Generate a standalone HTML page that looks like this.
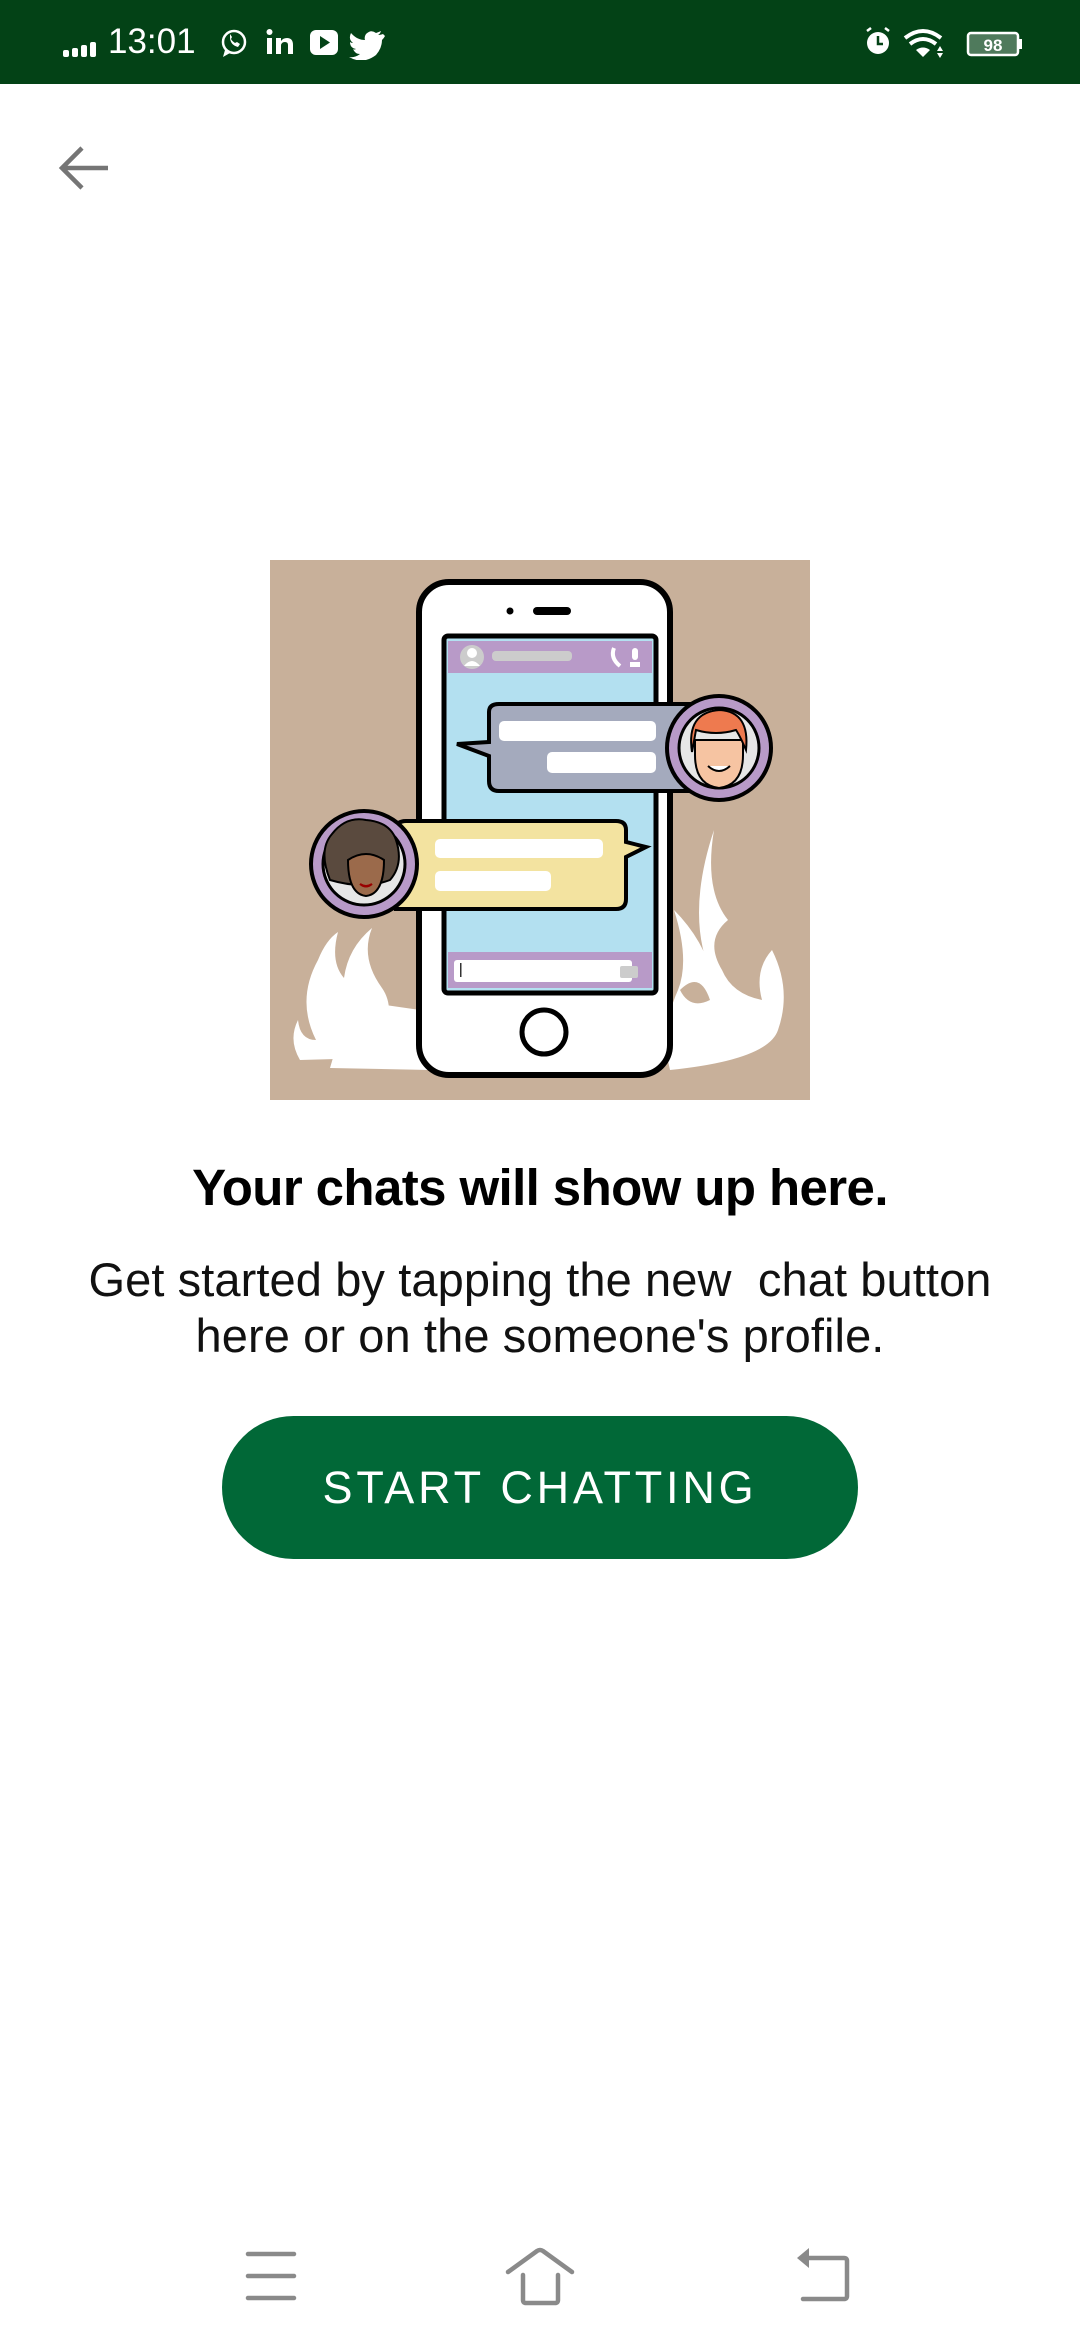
<!DOCTYPE html>
<html><head><meta charset="utf-8"><style>
*{margin:0;padding:0;box-sizing:border-box}
body{width:1080px;height:2340px;background:#fff;position:relative;overflow:hidden;font-family:"Liberation Sans",sans-serif}
.sb{position:absolute;left:0;top:0;width:1080px;height:84px;background:#034216;color:#fff}
.abs{position:absolute}
.title{position:absolute;left:0;width:1080px;top:1158px;text-align:center;font-weight:bold;font-size:51px;letter-spacing:-0.6px;color:#000}
.body{position:absolute;left:0;width:1080px;top:1252px;text-align:center;font-size:47px;line-height:56px;color:#111;letter-spacing:0.1px}
.btn{position:absolute;left:222px;top:1416px;width:636px;height:143px;border-radius:72px;background:#016837;color:#fff;font-size:45px;letter-spacing:3.8px;text-align:center;line-height:143px}
</style></head><body>
<div class="sb">
 <svg class="abs" style="left:60px;top:38px" width="40" height="20"><rect x="3" y="12" width="6" height="7" rx="2" fill="#fff"/><rect x="12" y="10" width="6" height="9" rx="2" fill="#fff"/><rect x="21" y="7" width="6" height="12" rx="2" fill="#fff"/><rect x="30" y="4" width="6" height="15" rx="2" fill="#fff"/></svg>
 <div class="abs" style="left:108px;top:22px;font-size:35px">13:01</div>
 <svg class="abs" style="left:220px;top:28px" width="170" height="32">
  <circle cx="14" cy="14" r="11" fill="none" stroke="#fff" stroke-width="2.5"/><path d="M5 22 L3 29 L10 25" fill="#fff"/><path d="M10 9 q0 8 8 10 l2-3 -3-2 -2 1 q-3-2-4-4 l1-2 -2-3z" fill="#fff"/>
  <rect x="47" y="10" width="5" height="16" fill="#fff"/><circle cx="49.5" cy="4" r="3" fill="#fff"/><path d="M56 10h5v3q2-3 6-3q6 0 6 7v9h-5v-9q0-3-3-3q-4 0-4 4v8h-5z" fill="#fff"/>
  <rect x="90" y="2" width="28" height="25" rx="6" fill="#fff"/><path d="M100 8 L110 14.5 L100 21z" fill="#034216"/>
  <path d="M163 6 q-3 1-5 1 q2-1 3-4 q-2 1-5 2 q-5-4-10 1 q-2 3-1 6 q-8 0-14-7 q-3 6 2 10 q-2 0-3-1 q0 6 6 7 q-2 1-3 0 q2 5 7 5 q-5 4-11 3 q14 8 27-2 q6-7 6-15 q2-2 3-4z" fill="#fff"/>
 </svg>
 <svg class="abs" style="left:860px;top:26px" width="170" height="36">
  <circle cx="18" cy="17" r="11" fill="#fff"/><path d="M18 10v8h5" stroke="#034216" stroke-width="2.5" fill="none"/><path d="M7 5l4-3M29 5l-4-3" stroke="#fff" stroke-width="2.5"/>
  <path d="M45 12 q18-14 36 0" stroke="#fff" stroke-width="4" fill="none"/><path d="M50 18 q13-10 26 0" stroke="#fff" stroke-width="4" fill="none"/><path d="M56 24 q7-5 14 0 l-7 7z" fill="#fff"/><path d="M80 20l3 5h-6zM80 32l3-5h-6z" fill="#fff"/>
  <rect x="108" y="7" width="50" height="22" rx="3" fill="#4f7a5c" stroke="#fff" stroke-width="2.5"/><rect x="159" y="13" width="3" height="10" fill="#fff"/><text x="133" y="25" fill="#fff" font-size="17" font-weight="bold" text-anchor="middle" font-family="Liberation Sans">98</text>
 </svg>
</div>
<svg class="abs" style="left:56px;top:144px" width="56" height="48"><path d="M52 24H6M26 4L6 24l20 20" stroke="#757575" stroke-width="4.5" fill="none"/></svg>

<svg class="abs" style="left:270px;top:560px" width="540" height="540" viewBox="0 0 540 540">
 <rect width="540" height="540" fill="#c8b09a"/>
 <path d="M30 500 q-12-20 -2-40 q2 20 18 20 q-20-40 2-80 q8-20 20-28 q-8 30 6 46 q4-30 28-50 q-12 30 10 60 q18 26 -10 70z" fill="#fff"/>
 <path d="M60 508 l100 2 -10-60 -70 -10z" fill="#fff"/>
 <path d="M400 510 q-10-40 8-80 q12-30 -4-80 q30 30 40 70 q-30-60 0-150 q-10 60 14 90 q-24 20 -6 50 q10 24 40 30 q-8-30 10-50 q20 40 6 80 q-10 30 -108 40z" fill="#fff"/>
 <path d="M410 430 q20-20 30 10 q-20 10 -30-10z" fill="#c8b09a"/>
 <rect x="149" y="22" width="251" height="493" rx="30" fill="#fff" stroke="#000" stroke-width="6"/>
 <circle cx="240" cy="51" r="3.5" fill="#000"/><rect x="263" y="47" width="38" height="8" rx="4" fill="#000"/>
 <rect x="174" y="76" width="212" height="357" rx="4" fill="#b3e0f0" stroke="#000" stroke-width="5"/>
 <rect x="178" y="81" width="204" height="32" fill="#b89ac8"/>
 <circle cx="202" cy="97" r="12" fill="#ccc"/><circle cx="202" cy="93" r="5" fill="#fff"/><path d="M194 106 q8-10 16 0z" fill="#fff"/>
 <rect x="222" y="91" width="80" height="10" rx="4" fill="#ccc"/>
 <path d="M344 88 q-4 10 6 18" stroke="#fff" stroke-width="4" fill="none"/><rect x="362" y="88" width="6" height="12" rx="3" fill="#fff"/><rect x="360" y="102" width="10" height="5" fill="#fff"/>
 <rect x="178" y="392" width="204" height="36" fill="#b89ac8"/>
 <rect x="184" y="400" width="178" height="22" rx="3" fill="#fff"/><rect x="190" y="403" width="1.5" height="14" fill="#333"/><rect x="350" y="406" width="18" height="12" rx="2" fill="#ccc"/>
 <circle cx="274" cy="472" r="22" fill="#fff" stroke="#000" stroke-width="5"/>
 <path d="M219 152 q0-8 10-8 h195 v87 h-195 q-10 0-10-10 v-25 l-32-12 32-2z" fill="#a4aabd" stroke="#000" stroke-width="4"/>
 <rect x="229" y="161" width="157" height="20" rx="5" fill="#fff"/><rect x="277" y="192" width="109" height="21" rx="5" fill="#fff"/>
 <circle cx="449" cy="188" r="52" fill="#b89ac8" stroke="#000" stroke-width="4"/><circle cx="449" cy="188" r="40" fill="#e6e6e6" stroke="#000" stroke-width="3"/>
 <path d="M425 195 q0 30 24 33 q24-3 24-33 v-15 h-48z" fill="#f6c4a2" stroke="#000" stroke-width="2"/>
 <path d="M422 192 q-6-40 28-42 q30 2 26 40 q-6-14-10-20 q-20 6-40 0z" fill="#ee7a4f" stroke="#000" stroke-width="2"/>
 <path d="M438 206 q11 10 22 0" stroke="#000" stroke-width="2" fill="#fff"/>
 <path d="M126 270 q0-9 10-9 h210 q10 0 10 9 v12 l20 5 -20 10 v42 q0 10-10 10 h-220z" fill="#f3e3a0" stroke="#000" stroke-width="4"/>
 <rect x="165" y="279" width="168" height="19" rx="5" fill="#fff"/><rect x="165" y="311" width="116" height="20" rx="5" fill="#fff"/>
 <circle cx="94" cy="304" r="53" fill="#b89ac8" stroke="#000" stroke-width="4"/><circle cx="94" cy="304" r="41" fill="#e6e6e6" stroke="#000" stroke-width="3"/>
 <path d="M60 320 q-12-30 2-46 q14-18 34-14 q24 2 30 20 q8 24-6 40 q-26 10-60 0z" fill="#5a4a3e" stroke="#000" stroke-width="2"/>
 <path d="M78 300 q0 34 18 36 q18-2 18-36 q-18-12-36 0z" fill="#9b6a4b" stroke="#000" stroke-width="2"/>
 <path d="M90 324 q6 4 12 0 q-6 5-12 0z" fill="#c00" stroke="#900" stroke-width="2"/>
</svg>

<div class="title">Your chats will show up here.</div>
<div class="body">Get started by tapping the new&nbsp; chat button<br>here or on the someone's profile.</div>
<div class="btn">START CHATTING</div>

<svg class="abs" style="left:240px;top:2242px" width="620" height="70">
 <g stroke="#8a8a8a" stroke-width="4.5" stroke-linecap="round" fill="none">
  <path d="M8 12h46M8 34h46M8 56h46"/>
  <path d="M268 30 l29-21 q3-2 6 0 l29 21"/><path d="M283 33 v25 q0 3 3 3 h29 q3 0 3-3 v-25"/>
  <path d="M562 16 h42 q3 0 3 3 v35 q0 3-3 3 h-41"/>
 </g>
 <path d="M557 16 l12-10 v20z" fill="#8a8a8a"/>
</svg>
</body></html>
